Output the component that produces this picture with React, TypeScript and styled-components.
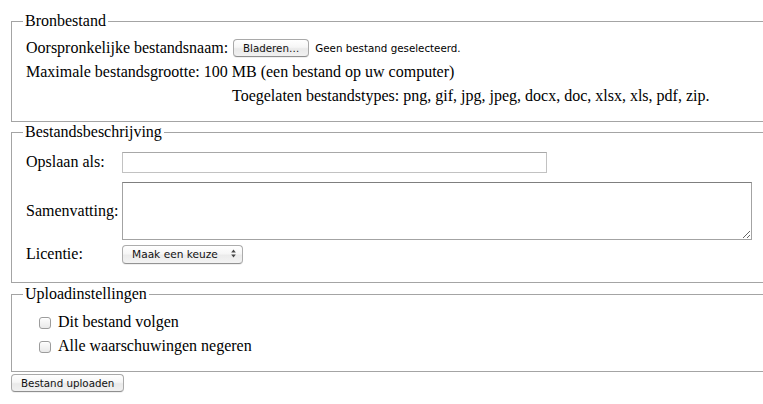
import React from "react";
import styled, { createGlobalStyle } from "styled-components";

const Global = createGlobalStyle`
  html, body { margin: 0; padding: 0; background: #fff; }
  body { font-family: "Liberation Serif", "Times New Roman", serif; font-size: 16px; color: #000; }
`;

const Page = styled.form`
  padding: 12px 0 0 11px;
  width: 100%;
  box-sizing: border-box;
  overflow: hidden;
  height: 404px;
`;

const Fieldset = styled.fieldset<{ $pt: number; $pb: number; $mb: number }>`
  margin: 0 0 ${(p) => p.$mb}px 0;
  width: calc(100% + 40px);
  box-sizing: border-box;
  min-inline-size: 0;
  border: 1px solid #a4a4a4;
  padding: ${(p) => p.$pt}px 0 ${(p) => p.$pb}px 11px;
`;

const Legend = styled.legend`
  padding: 0 2px;
  font-size: 16px;
  line-height: 18px;
`;

const FormGrid = styled.div<{ $labelWidth: number; $rows: string }>`
  display: grid;
  grid-template-columns: ${(p) => p.$labelWidth}px 1fr;
  grid-template-rows: ${(p) => p.$rows};
  align-items: center;
  padding-left: 3px;
  line-height: 18px;
`;

const Wide = styled.div`
  grid-column: 1 / span 2;
  white-space: nowrap;
`;

const Cell = styled.div`
  display: flex;
  align-items: center;
  white-space: nowrap;
`;

const MacButton = styled.button<{ $ml?: number; $px: number }>`
  font-family: "DejaVu Sans", "Lucida Grande", sans-serif;
  font-size: 10.3px;
  height: 18px;
  line-height: 16px;
  padding: 0 ${(p) => p.$px}px;
  margin: 0 0 0 ${(p) => p.$ml ?? 0}px;
  color: #111;
  border: 1px solid #a9a9a9;
  border-bottom-color: #8f8f8f;
  border-radius: 4px;
  background: linear-gradient(#ffffff, #f6f6f6 45%, #e9e9e9 55%, #f1f1f1);
  box-shadow: 0 1px 0 rgba(0, 0, 0, 0.06);
  white-space: nowrap;
`;

const FileStatus = styled.span`
  font-family: "DejaVu Sans", "Lucida Grande", sans-serif;
  font-size: 10.3px;
  margin-left: 6px;
`;

const TextInput = styled.input`
  width: 425px;
  height: 21px;
  box-sizing: border-box;
  margin: 0;
  border: 1px solid #c2c2c2;
  border-top-color: #a8a8a8;
  background: #fff;
  padding: 0 3px;
  font: inherit;
`;

const TextArea = styled.textarea`
  width: 630px;
  height: 58px;
  box-sizing: border-box;
  margin: 0;
  border: 1px solid #a3a3a3;
  border-top-color: #7f7f7f;
  background: #fff;
  padding: 2px;
  font: inherit;
  display: block;
`;

const SelectWrap = styled.div`
  position: relative;
  width: 121px;
  height: 19px;
`;

const Select = styled.select`
  appearance: none;
  -webkit-appearance: none;
  width: 121px;
  height: 19px;
  box-sizing: border-box;
  margin: 0;
  padding: 0 0 0 9px;
  font-family: "DejaVu Sans", "Lucida Grande", sans-serif;
  font-size: 10.6px;
  color: #111;
  border: 1px solid #acacac;
  border-bottom-color: #939393;
  border-radius: 4px;
  background: linear-gradient(#ffffff, #f6f6f6 45%, #ebebeb 55%, #f3f3f3);
  box-shadow: 0 1px 0 rgba(0, 0, 0, 0.06);
`;

const Arrows = styled.svg`
  position: absolute;
  right: 7px;
  top: 5px;
  pointer-events: none;
`;

const Options = styled.div`
  display: grid;
  grid-template-rows: 24px 24px;
  align-items: center;
  padding-left: 16px;
  line-height: 18px;
`;

const CheckRow = styled.label`
  display: flex;
  align-items: center;
  white-space: nowrap;
`;

const Check = styled.input`
  appearance: none;
  -webkit-appearance: none;
  width: 12px;
  height: 12px;
  margin: 2px 7px 0 0;
  border: 1px solid #9c9c9c;
  border-radius: 3px;
  background: linear-gradient(#fdfdfd, #e9e9e9);
  box-shadow: inset 0 1px 0 #fff;
  box-sizing: border-box;
`;

const SubmitRow = styled.div`
  margin-top: 1px;
`;

export default function App() {
  return (
    <>
      <Global />
      <Page onSubmit={(e) => e.preventDefault()}>
        <Fieldset $pt={6} $pb={13} $mb={1}>
          <Legend>Bronbestand</Legend>
          <FormGrid $labelWidth={206} $rows="24px 24px 24px">
            <Cell>Oorspronkelijke bestandsnaam:</Cell>
            <Cell>
              <MacButton type="button" $ml={1} $px={9}>Bladeren…</MacButton>
              <FileStatus>Geen bestand geselecteerd.</FileStatus>
            </Cell>
            <Wide>Maximale bestandsgrootte: 100 MB (een bestand op uw computer)</Wide>
            <div />
            <Cell>Toegelaten bestandstypes: png, gif, jpg, jpeg, docx, doc, xlsx, xls, pdf, zip.</Cell>
          </FormGrid>
        </Fieldset>

        <Fieldset $pt={6} $pb={19} $mb={2}>
          <Legend>Bestandsbeschrijving</Legend>
          <FormGrid $labelWidth={96} $rows="30px 67px 19px">
            <Cell>Opslaan als:</Cell>
            <Cell>
              <TextInput type="text" />
            </Cell>
            <Cell>Samenvatting:</Cell>
            <Cell>
              <TextArea />
            </Cell>
            <Cell>Licentie:</Cell>
            <Cell>
              <SelectWrap>
                <Select defaultValue="">
                  <option value="">Maak een keuze</option>
                </Select>
                <Arrows width="5" height="9" viewBox="0 0 5 9">
                  <path d="M2.5 0.5 L4.8 3.6 L0.2 3.6 Z" fill="#444" />
                  <path d="M2.5 8.5 L4.8 5.4 L0.2 5.4 Z" fill="#444" />
                </Arrows>
              </SelectWrap>
            </Cell>
          </FormGrid>
        </Fieldset>

        <Fieldset $pt={7} $pb={13} $mb={0}>
          <Legend>Uploadinstellingen</Legend>
          <Options>
            <CheckRow>
              <Check type="checkbox" />
              Dit bestand volgen
            </CheckRow>
            <CheckRow>
              <Check type="checkbox" />
              Alle waarschuwingen negeren
            </CheckRow>
          </Options>
        </Fieldset>

        <SubmitRow>
          <MacButton type="submit" $px={9}>Bestand uploaden</MacButton>
        </SubmitRow>
      </Page>
    </>
  );
}
